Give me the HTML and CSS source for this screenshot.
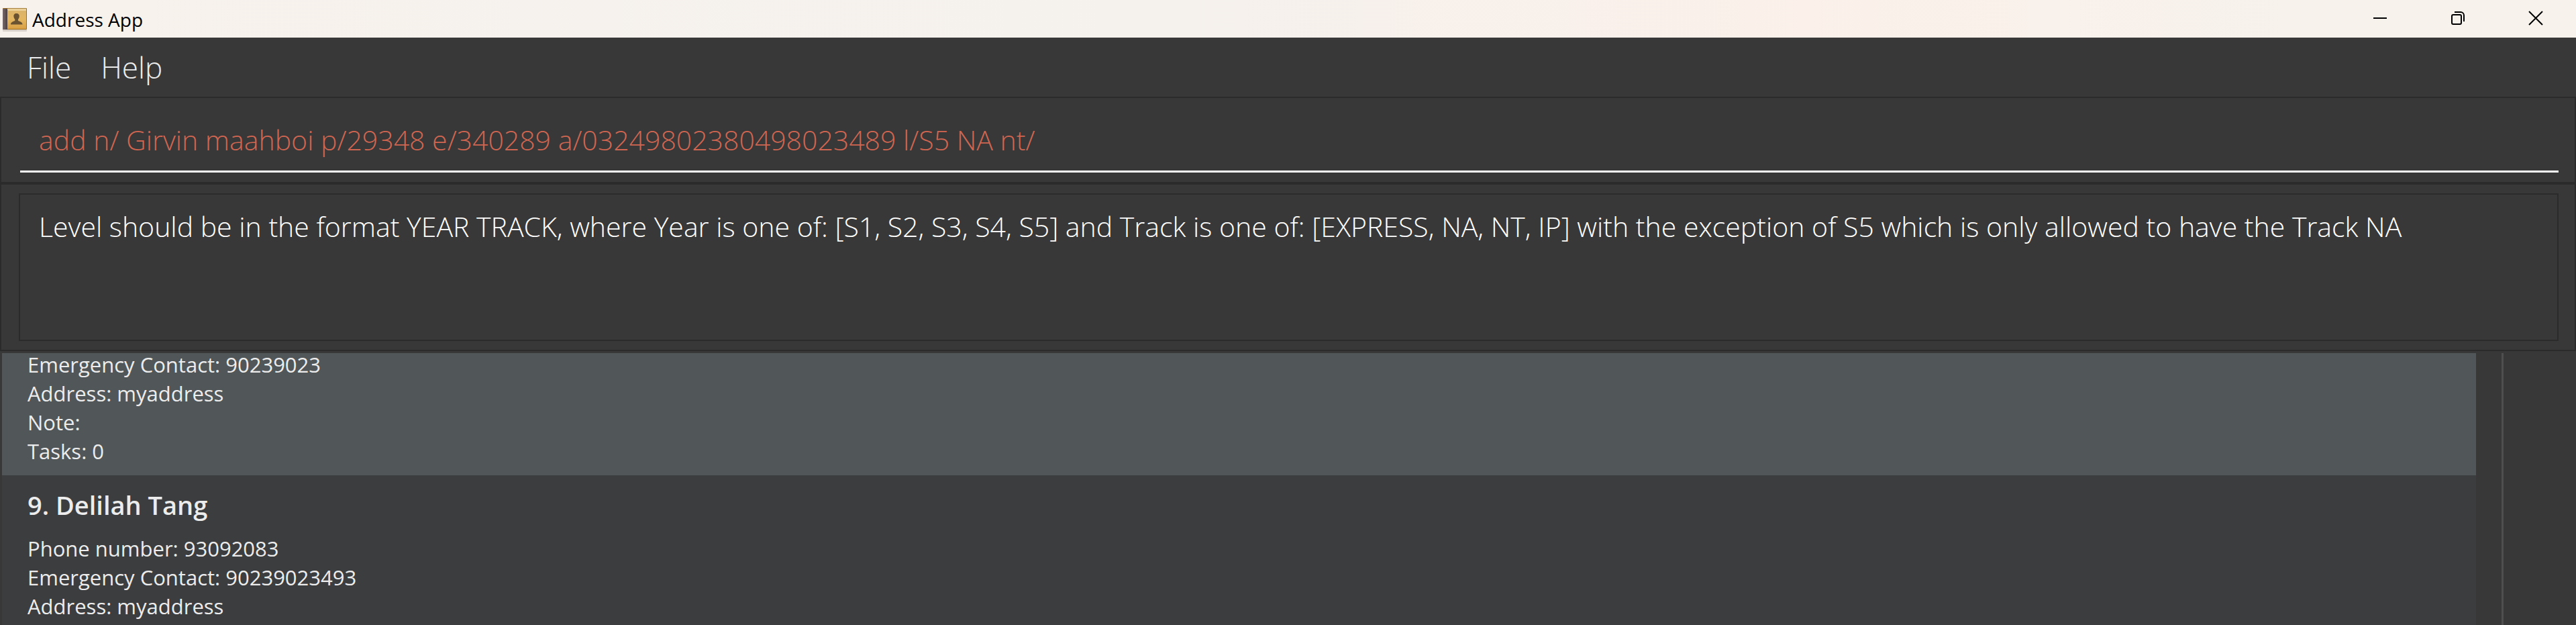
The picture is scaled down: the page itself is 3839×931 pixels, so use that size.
FILE: index.html
```html
<!DOCTYPE html>
<html lang="en">
<head>
<meta charset="utf-8">
<title>Address App</title>
<link rel="stylesheet" href="styles.css">
</head>
<body>
<header class="titlebar">
  <svg class="app-icon" width="40" height="40" viewBox="0 0 40 40" aria-hidden="true">
    <defs>
      <linearGradient id="cover" x1="0" y1="0" x2="0" y2="1"><stop offset="0" stop-color="#d9b26a"/><stop offset=".5" stop-color="#e3b762"/><stop offset="1" stop-color="#d9a045"/></linearGradient>
      <linearGradient id="spine" x1="0" y1="0" x2="1" y2="0"><stop offset="0" stop-color="#77696a"/><stop offset="1" stop-color="#4d4143"/></linearGradient>
    </defs>
    <rect x="0" y="6" width="36" height="33" rx="1" fill="#b9b2aa" opacity=".5"/>
    <rect x="0" y="4" width="36" height="32" rx="1" fill="#9a6d1f"/>
    <rect x="7" y="5" width="28" height="30" fill="url(#cover)"/>
    <rect x="4" y="5" width="31" height="1" fill="#fff3d0"/>
    <rect x="8" y="7" width="27" height="1" fill="#f3dca8"/>
    <rect x="0" y="5" width="7" height="31" fill="url(#spine)"/>
    <path d="M20.500 12c-3 0-4.500 2-4 5 .2 1.700 1 3 1.800 3.800v2c-1.500 1.200-6.300 1.700-6.300 5.700h17.500c0-4-5-4.500-6.500-5.700v-2c.8-.8 1.500-2.100 1.700-3.800.5-3-1.200-5-4.200-5z" fill="#6a5330"/>
  </svg>
  <h1 class="app-title">Address App</h1>
  <div class="window-buttons">
    <button class="window-button" aria-label="Minimize"><svg width="22" height="22" viewBox="0 0 22 22"><path d="M1 11h20" stroke="#000" stroke-width="2"/></svg></button>
    <button class="window-button" aria-label="Restore"><svg width="22" height="22" viewBox="0 0 22 22" fill="none" stroke="#000" stroke-width="2"><rect x="2" y="6" width="14" height="14" rx="2"/><path d="M6 2h9a5 5 0 0 1 5 5v9"/></svg></button>
    <button class="window-button" aria-label="Close"><svg width="22" height="22" viewBox="0 0 22 22"><path d="M1 1l20 20M21 1L1 21" stroke="#000" stroke-width="2"/></svg></button>
  </div>
</header>
<nav class="menubar">
  <button class="menu">File</button>
  <button class="menu">Help</button>
</nav>
<section class="pane command-pane">
  <input class="command" type="text" aria-label="Command" value="add n/ Girvin maahboi p/29348 e/340289 a/03249802380498023489 l/S5 NA nt/">
</section>
<section class="pane result-pane">
  <textarea class="result" aria-label="Result" readonly rows="3">Level should be in the format YEAR TRACK, where Year is one of: [S1, S2, S3, S4, S5] and Track is one of: [EXPRESS, NA, NT, IP] with the exception of S5 which is only allowed to have the Track NA</textarea>
</section>
<main class="content">
  <ul class="people">
    <li class="person selected">
      <p class="first-line">Emergency Contact: 90239023</p>
      <p>Address: myaddress</p>
      <p>Note:</p>
      <p>Tasks: 0</p>
    </li>
    <li class="person">
      <h2 class="name">9. Delilah Tang</h2>
      <p>Phone number: 93092083</p>
      <p>Emergency Contact: 90239023493</p>
      <p>Address: myaddress</p>
    </li>
  </ul>
  <aside class="side"></aside>
</main>
</body>
</html>
```
FILE: styles.css
```css
* { box-sizing: border-box; }

body {
  margin: 0;
  height: 100vh;
  overflow: hidden;
  display: flex;
  flex-direction: column;
  background: #383838;
  color: #ececec;
  font-family: "Open Sans", "Noto Sans", sans-serif;
}

button, input, textarea {
  font-family: inherit;
  border: 0;
  background: none;
}

h1, h2, p, ul { margin: 0; padding: 0; }

.titlebar {
  flex: none;
  display: flex;
  align-items: center;
  height: 56px;
  padding-left: 4px;
  background: linear-gradient(90deg, #f7f2ec, #f5f1ed 45%, #fbf0ea 70%, #f7f2ec 90%);
  color: #000;
}
.app-icon { display: block; }
.app-title {
  margin-left: 4px;
  padding-top: 2px;
  font-size: 28px;
  line-height: 40px;
  font-weight: 400;
}
.window-buttons {
  display: flex;
  align-self: flex-start;
  margin: 0 2px 0 auto;
}
.window-button {
  width: 116px;
  height: 54px;
  padding: 0;
  display: grid;
  place-items: center;
}

.menubar {
  flex: none;
  display: flex;
  gap: 44px;
  height: 88px;
  padding: 0 40px;
}
.menu {
  padding: 0;
  color: #ececec;
  font-size: 44px;
  line-height: 86px;
  font-weight: 300;
}

.pane {
  flex: none;
  border: 2px solid #2b2b2b;
  padding: 14px 24px 14px 28px;
}
.command-pane { padding-top: 20px; }
.command {
  display: block;
  width: 100%;
  height: 91px;
  padding: 0 28px 4px;
  border-bottom: 3px solid #fff;
  color: #d06651;
  font-size: 41px;
  font-weight: 300;
  outline: none;
}
.result-pane { padding: 13px 24px 13px 26px; }
.result {
  display: block;
  width: 100%;
  height: 220px;
  padding: 15px 28px;
  border: 2px solid #2b2b2b;
  color: #fff;
  font-size: 41px;
  line-height: 64px;
  font-weight: 300;
  resize: none;
  overflow: hidden;
}

.content {
  flex: 1;
  min-height: 0;
  display: flex;
  padding: 3px 0 0 3px;
}
.people {
  flex: 1;
  list-style: none;
  background: #3c3d3f;
  overflow: hidden;
}
.person {
  padding: 12px 38px;
  font-size: 31px;
  line-height: 43px;
}
.selected {
  padding-top: 0;
  padding-bottom: 14px;
  background: #515658;
}
.first-line {
  margin-bottom: 4px;
  line-height: 35px;
}
.name {
  margin-bottom: 12px;
  font-size: 38px;
  line-height: 64px;
  font-weight: 600;
}
.side {
  flex: none;
  width: 111px;
  margin-left: 38px;
  border-left: 3px solid #4f4f4f;
}
```
